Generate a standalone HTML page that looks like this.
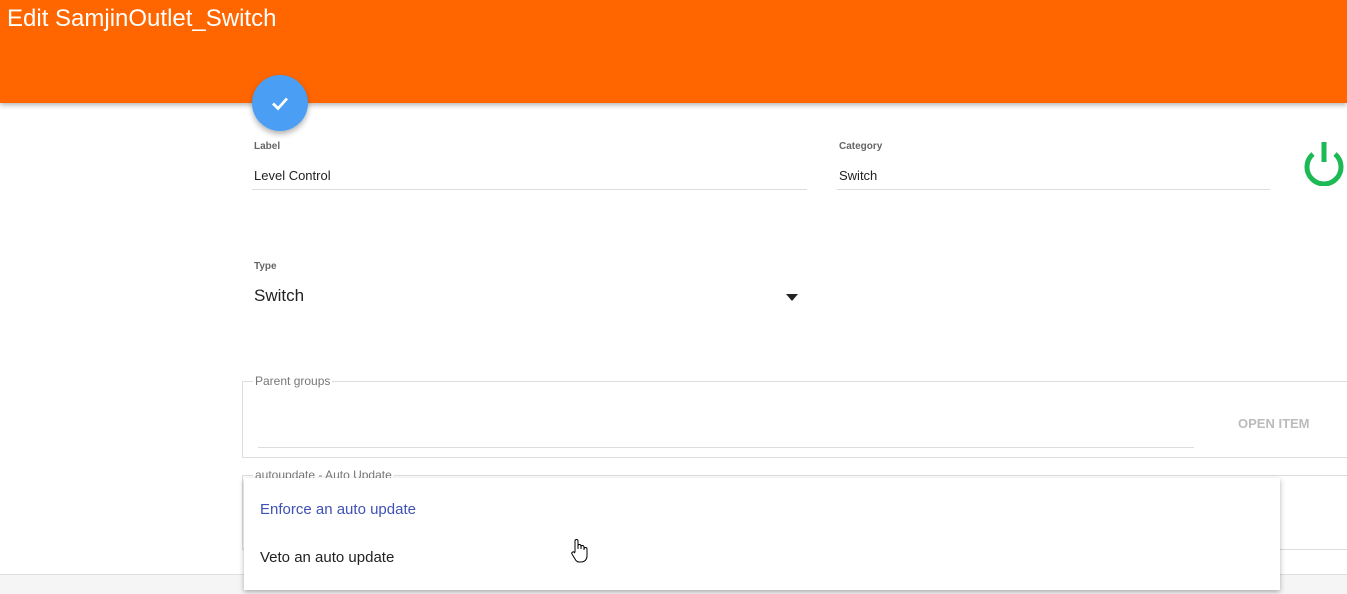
<!DOCTYPE html><html><head><style>
body{margin:0;width:1347px;height:593px;overflow:hidden;background:#fff;font-family:"Liberation Sans",sans-serif;position:relative}
.a{position:absolute}
.hdr{left:0;top:0;width:1347px;height:103px;background:#ff6600;box-shadow:0 2px 5px rgba(0,0,0,.3)}
.lbl{font-size:10px;font-weight:bold;color:#666}
.val{font-size:13px;color:#222}
.line{height:1px;background:#ddd}
.fs{border:1px solid #ddd;border-right:none}
</style></head><body>
<div class="a hdr"></div>
<div class="a" style="left:7px;top:5px;font-size:24px;color:#fff;font-weight:300">Edit SamjinOutlet_Switch</div>
<div class="a" style="left:252px;top:75px;width:56px;height:56px;border-radius:50%;background:#4a9ff5;box-shadow:0 3px 6px rgba(0,0,0,.3)">
<svg width="56" height="56" viewBox="0 0 56 56"><path d="M21 28.5l5 5 9-10" stroke="#fff" stroke-width="2.8" fill="none"/></svg></div>
<div class="a lbl" style="left:254px;top:141px">Label</div>
<div class="a val" style="left:254px;top:168px">Level Control</div>
<div class="a line" style="left:252px;top:189px;width:555px"></div>
<div class="a lbl" style="left:839px;top:141px">Category</div>
<div class="a val" style="left:839px;top:168px">Switch</div>
<div class="a line" style="left:837px;top:189px;width:433px"></div>
<svg class="a" style="left:1302px;top:140px" width="44" height="46" viewBox="0 0 44 46"><path d="M11 14a17 17 0 1 0 22 0" stroke="#1db954" stroke-width="5" fill="none"/><rect x="19.5" y="2" width="5" height="20" fill="#1db954"/></svg>
<div class="a lbl" style="left:254px;top:261px">Type</div>
<div class="a" style="left:254px;top:286px;font-size:17px;color:#222">Switch</div>
<div class="a" style="left:786px;top:294px;width:0;height:0;border-left:6px solid transparent;border-right:6px solid transparent;border-top:7px solid #222"></div>
<div class="a fs" style="left:242px;top:381px;width:1105px;height:75px"></div>
<div class="a" style="left:253px;top:374px;background:#fff;padding:0 2px;font-size:12px;color:#777">Parent groups</div>
<div class="a line" style="left:258px;top:447px;width:936px"></div>
<div class="a" style="left:1238px;top:416px;font-size:13px;font-weight:bold;color:#bbb">OPEN ITEM</div>
<div class="a fs" style="left:242px;top:475px;width:1105px;height:73px"></div>
<div class="a" style="left:253px;top:468px;background:#fff;padding:0 2px;font-size:12px;color:#777">autoupdate - Auto Update</div>
<div class="a" style="left:0;top:574px;width:1347px;height:19px;background:#f5f5f5;border-top:1px solid #e0e0e0"></div>
<div class="a" style="left:244px;top:478px;width:1036px;height:112px;background:#fff;box-shadow:0 2px 5px rgba(0,0,0,.3)">
<div class="a" style="left:16px;top:23px;font-size:15px;color:#3f51b5">Enforce an auto update</div>
<div class="a" style="left:16px;top:71px;font-size:15px;color:#222">Veto an auto update</div>
</div>
<svg class="a" style="left:570px;top:538px" width="20" height="26" viewBox="0 0 20 26"><path d="M5 14V3a1.5 1.5 0 0 1 3 0v8V8a1.5 1.5 0 0 1 3 0v3V9a1.5 1.5 0 0 1 3 0v3V11a1.5 1.5 0 0 1 3 0v7c0 3-2 6-6 6h-2c-2 0-3-1-4-3l-3-5a1.4 1.4 0 0 1 2.5-1.4z" fill="#fff" stroke="#000" stroke-width="1"/></svg>
</body></html>
